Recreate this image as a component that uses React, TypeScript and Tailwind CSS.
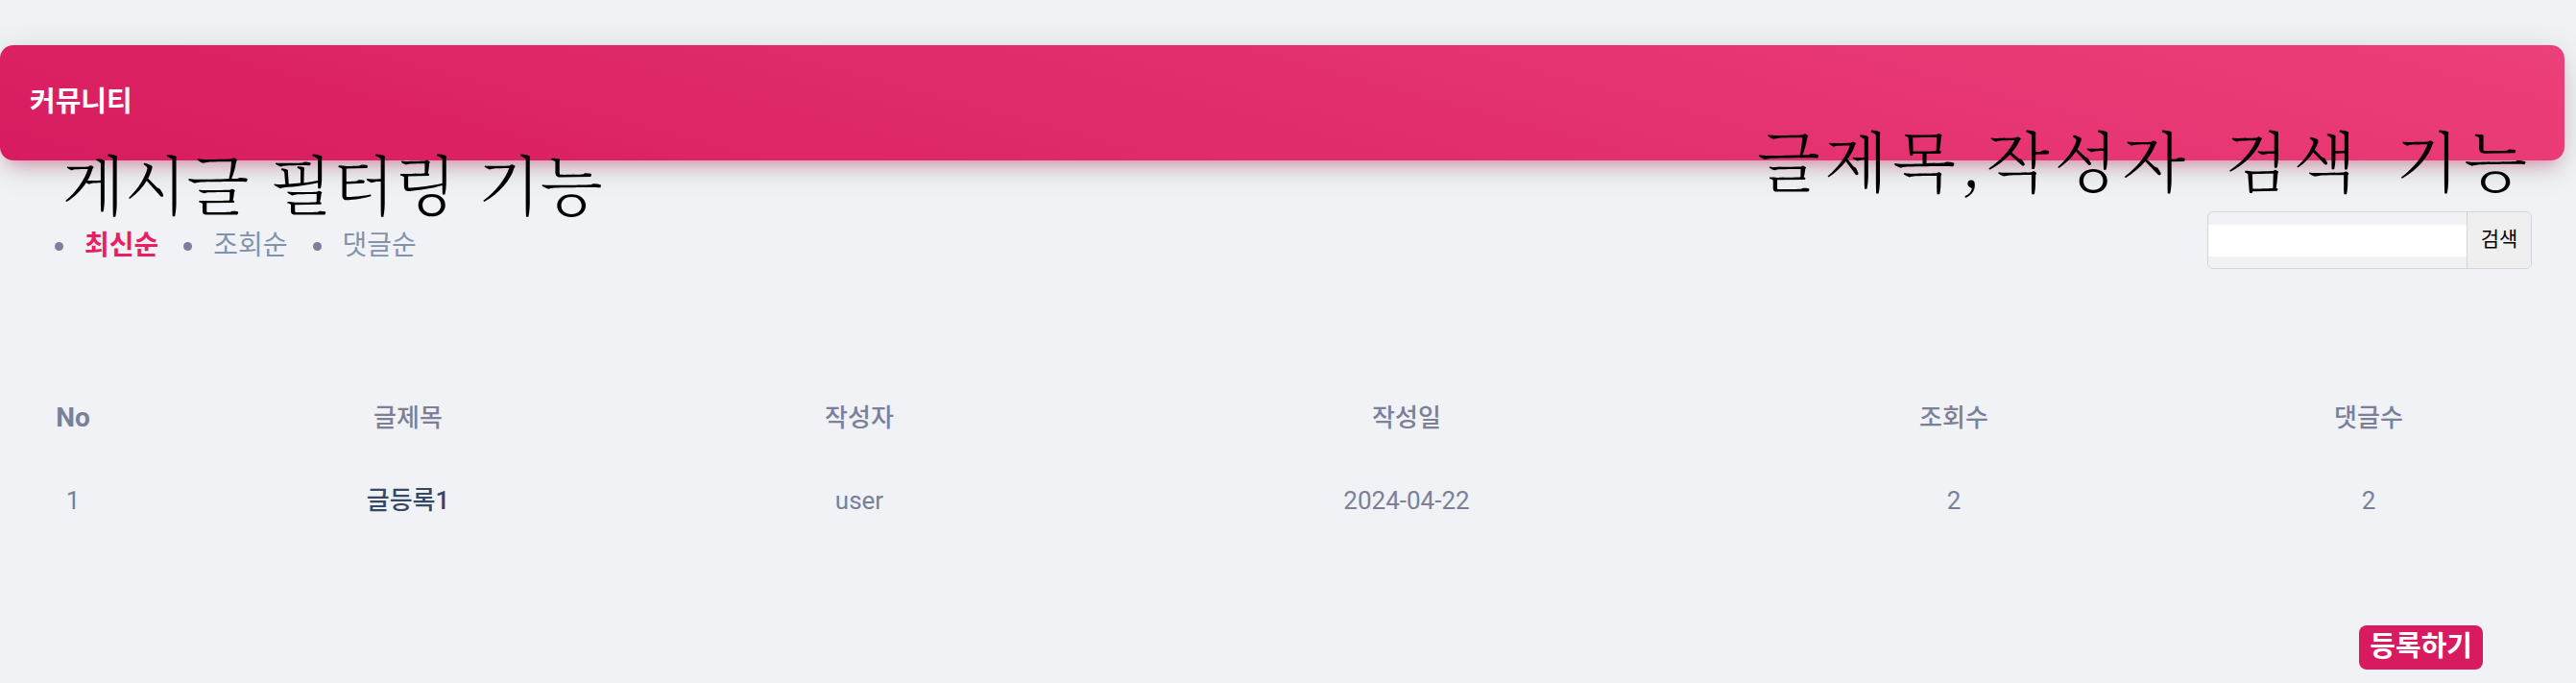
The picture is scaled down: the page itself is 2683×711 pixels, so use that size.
import { useState } from 'react'

interface Post {
  no: number
  title: string
  writer: string
  date: string
  views: number
  comments: number
}

const posts: Post[] = [
  { no: 1, title: '글등록1', writer: 'user', date: '2024-04-22', views: 2, comments: 2 },
]

const filters = ['최신순', '조회순', '댓글순']

const headers = ['No', '글제목', '작성자', '작성일', '조회수', '댓글수']

function App() {
  const [sort, setSort] = useState('최신순')
  const [keyword, setKeyword] = useState('')

  return (
    <div className="min-h-screen bg-[#f0f2f5] pt-[47px] pr-[12px] font-['Roboto','Noto_Sans_CJK_KR',sans-serif]">
      <header className="h-[120px] rounded-[14px] bg-[linear-gradient(195deg,#ec407a,#d81b60)] shadow-[0_7px_35px_0_rgba(0,0,0,0.14),0_12px_17px_-9px_rgba(233,30,99,0.4)] flex items-center px-[31px]">
        <h6 className="text-white text-[29px] font-bold">커뮤니티</h6>
      </header>

      <div className="relative z-10 -mt-[42px] flex justify-between">
        <div className="pl-[65px] pt-[29px]">
          <h1 className="text-[67px] leading-[70px] font-light text-black [word-spacing:5px] font-['Noto_Serif_CJK_KR','Noto_Sans_CJK_KR',serif]">
            게시글 필터링 기능
          </h1>
          <ul className="flex items-center gap-[26px] -ml-[8px] mt-[14px]">
            {filters.map((f) => (
              <li key={f} className="flex items-center gap-[22px]">
                <span className="w-[9px] h-[9px] rounded-full bg-[#7b809a]" />
                <button
                  onClick={() => setSort(f)}
                  className={
                    'text-[28px] leading-[36px] ' +
                    (sort === f ? 'text-[#e91e63] font-semibold' : 'text-[#8392ab]')
                  }
                >
                  {f}
                </button>
              </li>
            ))}
          </ul>
        </div>

        <div className="flex flex-col items-end pr-[34px] pt-[5px]">
          <h1 className="text-[68px] leading-[70px] font-light text-black tracking-[5px] [word-spacing:14px] font-['Noto_Serif_CJK_KR','Noto_Sans_CJK_KR',serif]">
            글제목,작성자 검색 기능
          </h1>
          <div className="mt-[20px] flex items-center h-[60px] w-[338px] border border-[#d2d6da] rounded-[6px] overflow-hidden">
            <input
              value={keyword}
              onChange={(e) => setKeyword(e.target.value)}
              className="h-[33px] flex-1 min-w-0 bg-white outline-none px-2 text-[22px]"
            />
            <button className="h-full w-[67px] border-l border-[#d2d6da] bg-[#efefef] text-[21px] text-black">
              검색
            </button>
          </div>
        </div>
      </div>

      <table className="mt-[112px] ml-[16px] table-fixed border-collapse">
        <colgroup>
          <col className="w-[120px]" />
          <col className="w-[578px]" />
          <col className="w-[362px]" />
          <col className="w-[778px]" />
          <col className="w-[362px]" />
          <col className="w-[452px]" />
        </colgroup>
        <thead>
          <tr className="h-[86px]">
            {headers.map((h, i) => (
              <th
                key={h}
                className={
                  'text-center text-[#7b809a] ' +
                  (i === 0 ? 'text-[28px] font-bold' : 'text-[26px] font-medium') +
                  (i === 5 ? ' pl-[50px]' : '')
                }
              >
                {h}
              </th>
            ))}
          </tr>
        </thead>
        <tbody>
          {posts.map((p) => (
            <tr key={p.no} className="h-[86px] text-[26px] text-[#7b809a]">
              <td className="text-center">{p.no}</td>
              <td className="text-center text-[#344767] font-medium">{p.title}</td>
              <td className="text-center">{p.writer}</td>
              <td className="text-center">{p.date}</td>
              <td className="text-center">{p.views}</td>
              <td className="text-center pl-[50px]">{p.comments}</td>
            </tr>
          ))}
        </tbody>
      </table>

      <div className="flex justify-end mt-[87px] pr-[85px] pb-[14px]">
        <button className="h-[46px] px-[11px] rounded-[8px] bg-[#d81b60] text-white text-[29px] font-bold">
          등록하기
        </button>
      </div>
    </div>
  )
}

export default App
